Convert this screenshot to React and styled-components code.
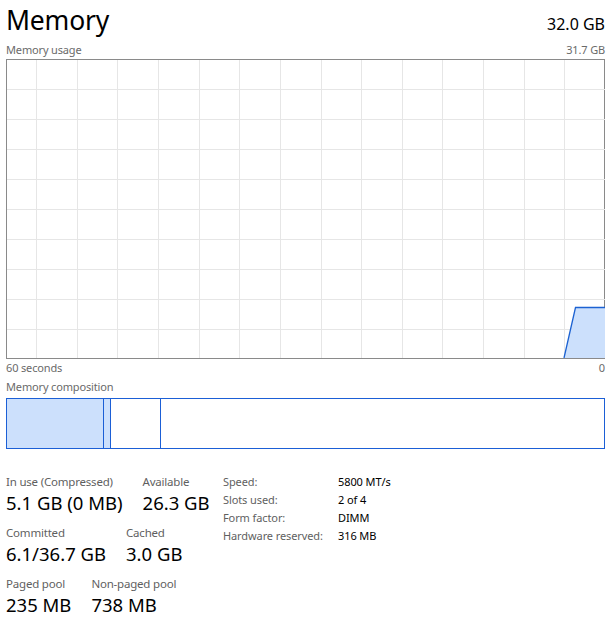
import React from "react";
import styled, { createGlobalStyle } from "styled-components";

const Global = createGlobalStyle`
  html, body { margin: 0; padding: 0; background: #fff; }
  body { font-family: "Noto Sans", "Open Sans", sans-serif; color: #000; }
`;

const Page = styled.div`
  width: 599px;
  padding: 0 8px 0 6px;
`;

const Header = styled.div`
  display: flex;
  justify-content: space-between;
  align-items: baseline;
  height: 41px;
`;

const Title = styled.div`
  font-size: 26.5px;
  line-height: 41px;
  letter-spacing: -0.2px;
`;

const Total = styled.div`
  font-size: 16px;
  line-height: 41px;
`;

const Caption = styled.div`
  display: flex;
  justify-content: space-between;
  font-size: 11px;
  letter-spacing: -0.15px;
  line-height: 17px;
  color: #6a6a6a;
  height: ${(p) => p.$h || 17}px;
`;

const Graph = styled.div`
  height: 298px;
  border: 1px solid #8a8a8a;
  svg { display: block; }
`;

const Composition = styled.div`
  display: flex;
  height: 49px;
  border: 1px solid #1b5fd6;
  margin-top: 3px;
`;

const Segment = styled.div`
  flex: ${(p) => (p.$grow ? "1" : `0 0 ${p.$w}px`)};
  background: ${(p) => (p.$filled ? "#cce0fc" : "#fff")};
  border-right: ${(p) => (p.$divider ? "1px solid #1b5fd6" : "none")};
`;

const Stats = styled.div`
  display: flex;
  margin-top: 24px;
`;

const LeftCol = styled.div`
  display: flex;
  flex-direction: column;
  width: 217px;
`;

const StatRow = styled.div`
  display: flex;
  gap: 20px;
  height: 51px;
`;

const Stat = styled.div`
  display: flex;
  flex-direction: column;
`;

const StatLabel = styled.div`
  font-size: 11.5px;
  letter-spacing: -0.2px;
  line-height: 17px;
  color: #5f5f5f;
`;

const StatValue = styled.div`
  font-size: 18.5px;
  line-height: 26px;
  color: #000;
  white-space: nowrap;
`;

const Details = styled.div`
  display: grid;
  grid-template-columns: 115px auto;
  grid-auto-rows: 18px;
  font-size: 11px;
  letter-spacing: -0.1px;
  line-height: 18px;
`;

const DKey = styled.div`
  color: #5f5f5f;
`;

const DVal = styled.div`
  color: #000;
`;

const W = 598;
const H = 298;

function UsageChart() {
  const hLines = [];
  for (let i = 0; i < 9; i++) hLines.push(29 + i * 30);
  const vLines = [];
  for (let x = 29; x < W; x += 40.65) vLines.push(Math.round(x) + 0.5);
  return (
    <svg width={W} height={H} viewBox={`0 0 ${W} ${H}`}>
      {hLines.map((y) => (
        <line key={"h" + y} x1="0" x2={W} y1={y + 0.5} y2={y + 0.5} stroke="#e6e6e6" strokeWidth="1" />
      ))}
      {vLines.map((x) => (
        <line key={"v" + x} x1={x} x2={x} y1="0" y2={H} stroke="#e6e6e6" strokeWidth="1" />
      ))}
      <polygon points={`557,${H} 568.5,247.5 ${W},247.5 ${W},${H}`} fill="#cce0fc" />
      <polyline points={`557,${H} 568.5,247.5 ${W},247.5`} fill="none" stroke="#1c62d2" strokeWidth="1.3" />
    </svg>
  );
}

export default function App() {
  return (
    <Page>
      <Global />
      <Header>
        <Title>Memory</Title>
        <Total>32.0 GB</Total>
      </Header>
      <Caption $h={18}>
        <span>Memory usage</span>
        <span>31.7 GB</span>
      </Caption>
      <Graph>
        <UsageChart />
      </Graph>
      <Caption $h={19}>
        <span>60 seconds</span>
        <span>0</span>
      </Caption>
      <Caption>
        <span>Memory composition</span>
      </Caption>
      <Composition>
        <Segment $w={96} $filled $divider />
        <Segment $w={6} $filled $divider />
        <Segment $w={49} $divider />
        <Segment $grow />
      </Composition>
      <Stats>
        <LeftCol>
          <StatRow>
            <Stat>
              <StatLabel>In use (Compressed)</StatLabel>
              <StatValue>5.1 GB (0 MB)</StatValue>
            </Stat>
            <Stat>
              <StatLabel>Available</StatLabel>
              <StatValue>26.3 GB</StatValue>
            </Stat>
          </StatRow>
          <StatRow>
            <Stat>
              <StatLabel>Committed</StatLabel>
              <StatValue>6.1/36.7 GB</StatValue>
            </Stat>
            <Stat>
              <StatLabel>Cached</StatLabel>
              <StatValue>3.0 GB</StatValue>
            </Stat>
          </StatRow>
          <StatRow>
            <Stat>
              <StatLabel>Paged pool</StatLabel>
              <StatValue>235 MB</StatValue>
            </Stat>
            <Stat>
              <StatLabel>Non-paged pool</StatLabel>
              <StatValue>738 MB</StatValue>
            </Stat>
          </StatRow>
        </LeftCol>
        <Details>
          <DKey>Speed:</DKey>
          <DVal>5800 MT/s</DVal>
          <DKey>Slots used:</DKey>
          <DVal>2 of 4</DVal>
          <DKey>Form factor:</DKey>
          <DVal>DIMM</DVal>
          <DKey>Hardware reserved:</DKey>
          <DVal>316 MB</DVal>
        </Details>
      </Stats>
    </Page>
  );
}
